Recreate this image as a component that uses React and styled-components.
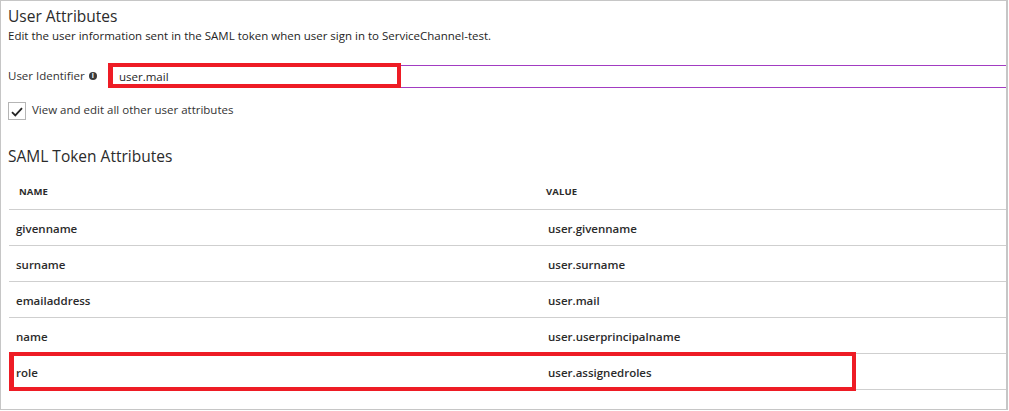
import React from "react";
import styled, { createGlobalStyle } from "styled-components";

const GlobalStyle = createGlobalStyle`
  html, body {
    margin: 0;
    padding: 0;
    background: #fff;
  }
  body {
    font-family: "Open Sans", "Noto Sans", "DejaVu Sans", sans-serif;
    color: #252525;
  }
`;

const rows = [
  { name: "givenname", value: "user.givenname" },
  { name: "surname", value: "user.surname" },
  { name: "emailaddress", value: "user.mail" },
  { name: "name", value: "user.userprincipalname" },
  { name: "role", value: "user.assignedroles", marked: true },
];

function App() {
  return (
    <>
      <GlobalStyle />
      <Panel>
        <Title>User Attributes</Title>
        <Subtitle>
          Edit the user information sent in the SAML token when user sign in to
          ServiceChannel-test.
        </Subtitle>

        <FieldRow>
          <FieldLabel>
            User Identifier
            <InfoDot>i</InfoDot>
          </FieldLabel>
          <InputWrap>
            <TextInput defaultValue="user.mail" readOnly />
            <Highlight $width={293} />
          </InputWrap>
        </FieldRow>

        <CheckRow>
          <CheckBox>
            <svg width="12" height="10" viewBox="0 0 12 10">
              <path
                d="M1 5.2 L4.3 8.4 L11 1.2"
                fill="none"
                stroke="#252525"
                strokeWidth="1.8"
              />
            </svg>
          </CheckBox>
          <CheckLabel>View and edit all other user attributes</CheckLabel>
        </CheckRow>

        <SectionTitle>SAML Token Attributes</SectionTitle>

        <Table>
          <HeadRow>
            <HeadCell>NAME</HeadCell>
            <HeadCell>VALUE</HeadCell>
          </HeadRow>
          {rows.map((r) => (
            <Row key={r.name}>
              <Cell>{r.name}</Cell>
              <Cell $value>{r.value}</Cell>
              {r.marked && <RowHighlight />}
            </Row>
          ))}
        </Table>
      </Panel>
    </>
  );
}

const Panel = styled.div`
  box-sizing: border-box;
  width: 1008px;
  height: 410px;
  border: 1px solid #c6c6c6;
  border-right-width: 2px;
  padding: 5px 0 0 7px;
  overflow: hidden;
`;

const Title = styled.div`
  font-size: 15.5px;
  line-height: 21px;
  font-weight: 400;
  color: #2b2b2b;
`;

const Subtitle = styled.div`
  font-size: 11.5px;
  line-height: 16px;
  margin-top: 1px;
  color: #252525;
`;

const FieldRow = styled.div`
  display: flex;
  align-items: center;
  margin-top: 20px;
  height: 23px;
`;

const FieldLabel = styled.div`
  width: 100px;
  display: flex;
  align-items: center;
  font-size: 11.5px;
  color: #333;
`;

const InfoDot = styled.span`
  display: inline-flex;
  align-items: center;
  justify-content: center;
  width: 8px;
  height: 8px;
  margin-left: 4px;
  border-radius: 50%;
  background: #3a3a3a;
  color: #fff;
  font-size: 7px;
  font-weight: 700;
  line-height: 1;
`;

const InputWrap = styled.div`
  position: relative;
  flex: 1;
  height: 23px;
`;

const TextInput = styled.input`
  box-sizing: border-box;
  width: 100%;
  height: 23px;
  margin: 0;
  padding: 0 10px;
  border: 1px solid #a23cc2;
  border-right: none;
  outline: none;
  font-family: inherit;
  font-size: 11.5px;
  color: #1e1e1e;
  background: #fff;
`;

const Highlight = styled.div`
  position: absolute;
  box-sizing: border-box;
  top: -1px;
  left: 0;
  bottom: -1px;
  width: ${(p) => p.$width}px;
  border: 4px solid #ee1c25;
  border-left-width: 5px;
  pointer-events: none;
`;

const CheckRow = styled.div`
  display: flex;
  align-items: center;
  margin-top: 15px;
  height: 18px;
`;

const CheckBox = styled.div`
  box-sizing: border-box;
  width: 18px;
  height: 18px;
  border: 1px solid #b5b5b5;
  display: flex;
  align-items: center;
  justify-content: center;
  padding-top: 1px;
`;

const CheckLabel = styled.span`
  margin-left: 6px;
  margin-top: -3px;
  font-size: 11.5px;
  color: #333;
`;

const SectionTitle = styled.div`
  margin-top: 26px;
  font-size: 15.5px;
  line-height: 21px;
  color: #2b2b2b;
`;

const Table = styled.div`
  margin-top: 6px;
  margin-left: 1px;
`;

const HeadRow = styled.div`
  display: grid;
  grid-template-columns: 527px 1fr;
  align-items: center;
  height: 36px;
  border-bottom: 1px solid #cfcfcf;
`;

const HeadCell = styled.div`
  padding-left: 10px;
  font-size: 9.5px;
  font-weight: 700;
  letter-spacing: 0.1px;
  color: #2b2b2b;
`;

const Row = styled.div`
  position: relative;
  display: grid;
  grid-template-columns: 530px 1fr;
  align-items: center;
  height: 35px;
  border-bottom: 1px solid #cfcfcf;
`;

const Cell = styled.div`
  padding-left: ${(p) => (p.$value ? "9px" : "7px")};
  padding-top: 2px;
  font-size: 11.5px;
  font-weight: 600;
  color: #2b2b2b;
`;

const RowHighlight = styled.div`
  position: absolute;
  top: -2px;
  left: 0;
  bottom: -2px;
  width: 847px;
  box-sizing: border-box;
  border: 4px solid #ee1c25;
  border-left-width: 5px;
  pointer-events: none;
`;

export default App;
